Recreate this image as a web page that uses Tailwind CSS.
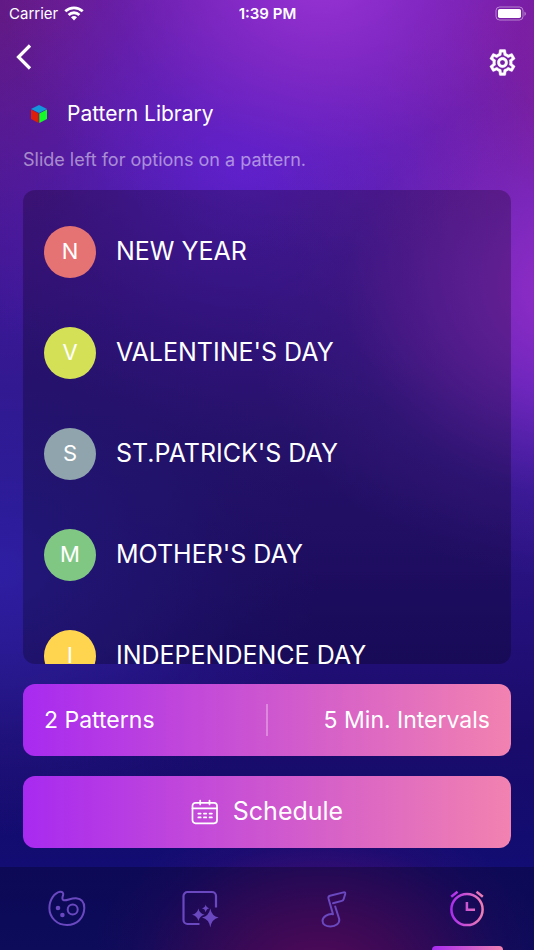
<!DOCTYPE html>
<html lang="en">
<head>
  <meta charset="UTF-8" />
  <meta name="viewport" content="width=device-width, initial-scale=1.0"/>
  <title>Pattern Library</title>
  <script src="https://cdn.jsdelivr.net/npm/@tailwindcss/browser@4"></script>
</head>
<body class="font-['Inter',sans-serif] text-white bg-[#160a6c]">
  <div class="h-screen flex flex-col overflow-hidden bg-[radial-gradient(44%_18%_at_60%_103%,#720c74_0%,#640c70b0_40%,#4a0a7030_80%,#4a0a7000_100%),radial-gradient(60%_30%_at_60%_-3%,#9a34d4_0%,#8c2cccd0_30%,#7824c860_65%,#7020c800_100%),radial-gradient(62%_30%_at_108%_31%,#942ec8_0%,#7c2ac8c8_35%,#5c24b850_70%,#5020b000_100%),radial-gradient(56%_28%_at_46%_18%,#561fcc_0%,#5420c8b0_30%,#4c1dbc50_65%,#3a1aa000_100%),radial-gradient(58%_34%_at_106%_12%,#8a1a84_0%,#861c8cd0_35%,#781ca060_70%,#701ca000_100%),radial-gradient(60%_34%_at_12%_0%,#681a80_0%,#621a84c0_35%,#54188850_70%,#50188800_100%),radial-gradient(60%_28%_at_0%_60%,#2e1ea2_0%,#2c1e9ca0_40%,#281a9040_75%,#24169000_100%),linear-gradient(to_bottom,#5218a0_0%,#481898_20%,#3c1896_32%,#33188e_45%,#281280_60%,#200e74_70%,#190b6a_78%,#130c70_88%,#10107a_100%)]">

    <!-- Status bar -->
    <div class="h-7 shrink-0 grid grid-cols-3 items-center pl-[9px] pr-2 text-[15px]">
      <div class="flex items-center gap-[6px]">
        <span>Carrier</span>
        <svg class="w-5 h-4" viewBox="0 0 20 16" fill="none" stroke="#fff" stroke-width="2.8">
          <path d="M1.3 5.3a12.6 12.6 0 0 1 17.4 0M4.6 8.9a7.9 7.9 0 0 1 10.800 0"/>
          <path d="M10 14.500l-3-3.200a4.400 4.400 0 0 1 6 0z" fill="#fff" stroke="none"/>
        </svg>
      </div>
      <span class="text-center font-semibold">1:39 PM</span>
      <svg class="justify-self-end w-[31px] h-4" viewBox="0 0 31 16" fill="none">
        <rect x="1" y="1" width="27" height="13" rx="3.6" stroke="#fff" stroke-opacity=".45"/>
        <rect x="3" y="3" width="23" height="9" rx="1.8" fill="#fff"/>
        <path d="M29.500 5.500v4.400q1.300-.7 1.300-2.200t-1.300-2.200z" fill="#fff" fill-opacity=".5"/>
      </svg>
    </div>

    <!-- Header -->
    <header class="shrink-0 flex justify-between items-start pl-4 pr-4">
      <button class="mt-4" aria-label="Back">
        <svg class="w-4 h-[26px]" viewBox="0 0 16 26" fill="none" stroke="#fff" stroke-width="3.2">
          <path d="M14 1.5L2.500 13L14 24.500"/>
        </svg>
      </button>
      <button class="mt-[19px]" aria-label="Settings">
        <svg class="w-[31px] h-[31px]" viewBox="0 0 24 24" fill="#fff" stroke="#fff" stroke-width=".3">
          <path d="M19.43 12.98c.04-.32.07-.64.07-.98s-.03-.66-.07-.98l2.11-1.65c.19-.15.24-.42.12-.64l-2-3.46c-.09-.16-.26-.25-.44-.25-.06 0-.12.01-.17.03l-2.49 1c-.52-.4-1.08-.73-1.69-.98l-.38-2.65C14.46 2.18 14.25 2 14 2h-4c-.25 0-.46.18-.49.42l-.38 2.65c-.61.25-1.17.59-1.69.98l-2.49-1c-.06-.02-.12-.03-.18-.03-.17 0-.34.09-.43.25l-2 3.46c-.13.22-.07.49.12.64l2.11 1.65c-.04.32-.07.65-.07.98s.03.66.07.98l-2.11 1.65c-.19.15-.24.42-.12.64l2 3.46c.09.16.26.25.44.25.06 0 .12-.01.17-.03l2.49-1c.52.4 1.08.73 1.69.98l.38 2.65c.03.24.24.42.49.42h4c.25 0 .46-.18.49-.42l.38-2.65c.61-.25 1.17-.59 1.69-.98l2.49 1c.06.02.12.03.18.03.17 0 .34-.09.43-.25l2-3.46c.12-.22.07-.49-.12-.64l-2.11-1.65zm-1.98-1.71c.04.31.05.52.05.73 0 .21-.02.43-.05.73l-.14 1.13.89.7 1.08.84-.7 1.21-1.27-.51-1.04-.42-.9.68c-.43.32-.84.56-1.25.73l-1.06.43-.16 1.13-.2 1.35h-1.4l-.19-1.35-.16-1.13-1.06-.43c-.43-.18-.83-.41-1.23-.71l-.91-.7-1.06.43-1.27.51-.7-1.21 1.08-.84.89-.7-.14-1.13c-.03-.31-.05-.54-.05-.74s.02-.43.05-.73l.14-1.13-.89-.7-1.08-.84.7-1.21 1.27.51 1.04.42.9-.68c.43-.32.84-.56 1.25-.73l1.06-.43.16-1.13.2-1.35h1.39l.19 1.35.16 1.13 1.06.43c.43.18.83.41 1.23.71l.91.7 1.06-.43 1.27-.51.7 1.21-1.07.85-.89.7.14 1.13zM12 8c-2.21 0-4 1.79-4 4s1.79 4 4 4 4-1.79 4-4-1.79-4-4-4zm0 6c-1.1 0-2-.9-2-2s.9-2 2-2 2 .9 2 2-.9 2-2 2z"/>
        </svg>
      </button>
    </header>

    <main class="flex-1 min-h-0 flex flex-col px-[23px] pt-5 pb-[19px]">
      <div class="flex items-center gap-5 pl-2 h-8">
        <svg class="w-4 h-[18px]" viewBox="0 0 16 18">
          <path d="M8 0l8 4-8 4-8-4z" fill="#1496dc"/>
          <path d="M0 4.6l7.7 4V18L0 14z" fill="#dc1e0a"/>
          <path d="M16 4.6l-7.7 4V18l7.7-4z" fill="#14fa28"/>
        </svg>
        <h1 class="text-[21px] leading-8">Pattern Library</h1>
      </div>
      <p class="mt-[18px] text-[18px] leading-6 text-white/50">Slide left for options on a pattern.</p>

      <!-- Patterns -->
      <ul class="mt-[18px] flex-1 min-h-0 overflow-hidden rounded-xl bg-black/25 pt-[11px] px-[21px] text-[25px]">
        <li class="h-[101px] flex items-center gap-5">
          <span class="size-[52px] rounded-full bg-[#e57373] flex items-center justify-center text-[22px]">N</span>
          NEW YEAR
        </li>
        <li class="h-[101px] flex items-center gap-5">
          <span class="size-[52px] rounded-full bg-[#d4e157] flex items-center justify-center text-[22px]">V</span>
          VALENTINE'S DAY
        </li>
        <li class="h-[101px] flex items-center gap-5">
          <span class="size-[52px] rounded-full bg-[#90a4ae] flex items-center justify-center text-[22px]">S</span>
          ST.PATRICK'S DAY
        </li>
        <li class="h-[101px] flex items-center gap-5">
          <span class="size-[52px] rounded-full bg-[#81c784] flex items-center justify-center text-[22px]">M</span>
          MOTHER'S DAY
        </li>
        <li class="h-[101px] flex items-center gap-5">
          <span class="size-[52px] rounded-full bg-[#ffd54f] flex items-center justify-center text-[22px]">I</span>
          INDEPENDENCE DAY
        </li>
      </ul>

      <div class="mt-5 h-[72px] shrink-0 flex items-center rounded-xl bg-linear-to-r/srgb from-[#a82af0] to-[#f282b0] px-[21px] text-[23px]">
        <button class="flex-1 text-left">2 Patterns</button>
        <span class="w-[2px] h-8 bg-white/30"></span>
        <button class="flex-1 text-right">5 Min. Intervals</button>
      </div>

      <button class="mt-5 h-[72px] shrink-0 flex items-center justify-center gap-[14px] rounded-xl bg-linear-to-r/srgb from-[#a82af0] to-[#f282b0] text-[25px]">
        <svg class="size-7" viewBox="0 0 28 28" fill="none" stroke="#fff" stroke-width="1.7" stroke-linecap="round">
          <rect x="1.500" y="4.800" width="24.500" height="20.500" rx="3"/>
          <path d="M1.500 10.300h24.500M9.200 2.500v4M18.500 2.500v4M7.300 15.600h2.400M12.900 15.600h2.400M18.500 15.600h2.400M7.300 19.400h2.400M12.900 19.400h2.400M18.500 19.400h2.400"/>
        </svg>
        Schedule
      </button>
    </main>

    <!-- Tab bar -->
    <nav class="h-[83px] shrink-0 grid grid-cols-4 bg-black/25 text-[#6a48bf]">
      <a href="#" class="flex items-center justify-center" aria-label="Colors">
        <svg class="size-10" viewBox="0 0 40 40" fill="none" stroke="currentColor" stroke-width="2">
          <path d="M13 2.800C15.500 2.400 16.800 4.200 16.100 6.200C15.400 8.200 14.600 10.500 16.800 11.200C19.800 12 23.500 9 29 9.200C34.500 9.600 37.400 13.500 37.300 19C37 29 30 36 20 36C10 36 2.400 28.500 2.400 19.300C2.400 10.500 7.500 3.900 13 2.800Z"/>
          <circle cx="25.7" cy="20.5" r="5"/>
          <circle cx="11" cy="19" r="2.3" fill="currentColor" stroke="none"/>
          <circle cx="15.4" cy="26" r="2.3" fill="currentColor" stroke="none"/>
        </svg>
      </a>
      <a href="#" class="flex items-center justify-center" aria-label="Effects">
        <svg class="size-10" viewBox="0 0 40 40">
          <path d="M19.500 35H7.500a4 4 0 0 1-4-4V7a4 4 0 0 1 4-4h24.500a4 4 0 0 1 4 4v11.500" fill="none" stroke="currentColor" stroke-width="2.200"/>
          <g fill="currentColor">
            <path d="M30.300 19.500Q31.800 27.200 38.600 28.600Q31.800 30 30.300 38.500Q28.800 30 22 28.600Q28.800 27.200 30.300 19.500Z"/>
            <path d="M18.400 19.500Q19.500 24.600 24.700 25.700Q19.500 26.900 18.400 32Q17.300 26.900 12 25.700Q17.300 24.600 18.400 19.500Z"/>
            <path d="M25.700 15.500Q26.300 18.700 29.400 19.300Q26.300 20 25.700 23.200Q25.100 20 22 19.300Q25.100 18.700 25.700 15.500Z"/>
          </g>
        </svg>
      </a>
      <a href="#" class="flex items-center justify-center" aria-label="Music">
        <svg class="size-10" viewBox="0 0 40 40" fill="none" stroke="currentColor" stroke-width="2" stroke-linecap="round" stroke-linejoin="round">
          <path d="M19 14.200L27.800 11.900Q29.300 11.500 29.700 10L31.200 5Q31.600 3 29.500 3.400L16 6.800Q14 7.400 14.500 9.400L19 25.200C13.500 24.500 8.500 28 8.500 31.800C8.500 35.300 12 37.500 16.500 37.500C22 37.500 26 34 25.200 30L21.200 17.500"/>
        </svg>
      </a>
      <a href="#" class="relative flex items-center justify-center" aria-label="Schedule" aria-current="page">
        <svg class="size-10" viewBox="0 0 40 40" fill="none" stroke="url(#tabGradient)" stroke-width="2.500">
          <defs>
            <linearGradient id="tabGradient" gradientUnits="userSpaceOnUse" x1="3" y1="20" x2="37" y2="20">
              <stop offset="0" stop-color="#a82af0"/>
              <stop offset="1" stop-color="#f282b0"/>
            </linearGradient>
          </defs>
          <circle cx="20" cy="20.500" r="15.600"/>
          <path d="M19.900 13V20.800H28"/>
          <path d="M4.200 7.800L10.500 2.800M29.500 2.800L35.800 7.800"/>
        </svg>
        <span class="absolute bottom-0 w-[71px] h-1 rounded-t-sm bg-linear-to-r/srgb from-[#a82af0] to-[#f282b0]"></span>
      </a>
    </nav>
  </div>
</body>
</html>
